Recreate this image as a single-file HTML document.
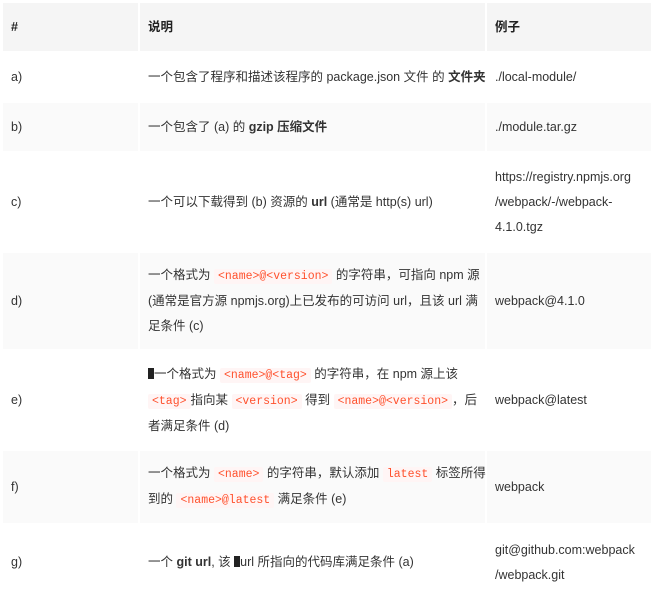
<!DOCTYPE html><html><head><meta charset="utf-8"><style>
body{margin:0;background:#fff;font-family:"Liberation Sans","Noto Sans CJK SC",sans-serif;font-size:12.5px;color:#333;overflow:hidden}
table{position:absolute;left:1px;top:1px;border-spacing:2px;width:652px;table-layout:fixed}
td,th{padding:0 8px;vertical-align:middle;line-height:25px;text-align:left;overflow-wrap:anywhere;word-break:break-all}
th{background:#f5f5f5;font-weight:bold;color:#222;height:48px}
tr.g td{background:#fafafa}
code{font-family:"Liberation Mono",monospace;font-size:11.5px;color:#ff502c;background:#fff5f5;padding:1px 4px;border-radius:2px}
.cur{display:inline-block;width:6px;height:11px;background:#222;vertical-align:-1px}
.nw{white-space:nowrap}
</style></head><body>
<table>
<colgroup><col style="width:135px"><col style="width:345px"><col style="width:164px"></colgroup>
<tr><th>#</th><th>说明</th><th>例子</th></tr>
<tr><td style="height:48px">a)</td><td class="nw" style="word-break:normal">一个包含了程序和描述该程序的 package.json 文件 的 <b>文件夹</b></td><td>./local-module/</td></tr>
<tr class="g"><td style="height:48px">b)</td><td>一个包含了 (a) 的 <b>gzip 压缩文件</b></td><td>./module.tar.gz</td></tr>
<tr><td style="height:98px">c)</td><td>一个可以下载得到 (b) 资源的 <b>url</b> (通常是 http(s) url)</td><td>https://registry.npmjs.org<br>/webpack/-/webpack-<br>4.1.0.tgz</td></tr>
<tr class="g"><td style="height:96px">d)</td><td class="nw">一个格式为 <code>&lt;name&gt;@&lt;version&gt;</code> 的字符串，可指向 npm 源<br>(通常是官方源 npmjs.org)上已发布的可访问 url，且该 url 满<br>足条件 (c)</td><td>webpack@4.1.0</td></tr>
<tr><td style="height:98px">e)</td><td class="nw"><span class="cur"></span>一个格式为 <code>&lt;name&gt;@&lt;tag&gt;</code> 的字符串，在 npm 源上该<br><code>&lt;tag&gt;</code>指向某 <code>&lt;version&gt;</code> 得到 <code>&lt;name&gt;@&lt;version&gt;</code>，后<br>者满足条件 (d)</td><td>webpack@latest</td></tr>
<tr class="g"><td style="height:72px">f)</td><td class="nw">一个格式为 <code>&lt;name&gt;</code> 的字符串，默认添加 <code>latest</code> 标签所得<br>到的 <code>&lt;name&gt;@latest</code> 满足条件 (e)</td><td>webpack</td></tr>
<tr><td style="height:75px">g)</td><td>一个 <b>git url</b>, 该 <span class="cur"></span>url 所指向的代码库满足条件 (a)</td><td>git@github.com:webpack<br>/webpack.git</td></tr>
</table>
</body></html>
